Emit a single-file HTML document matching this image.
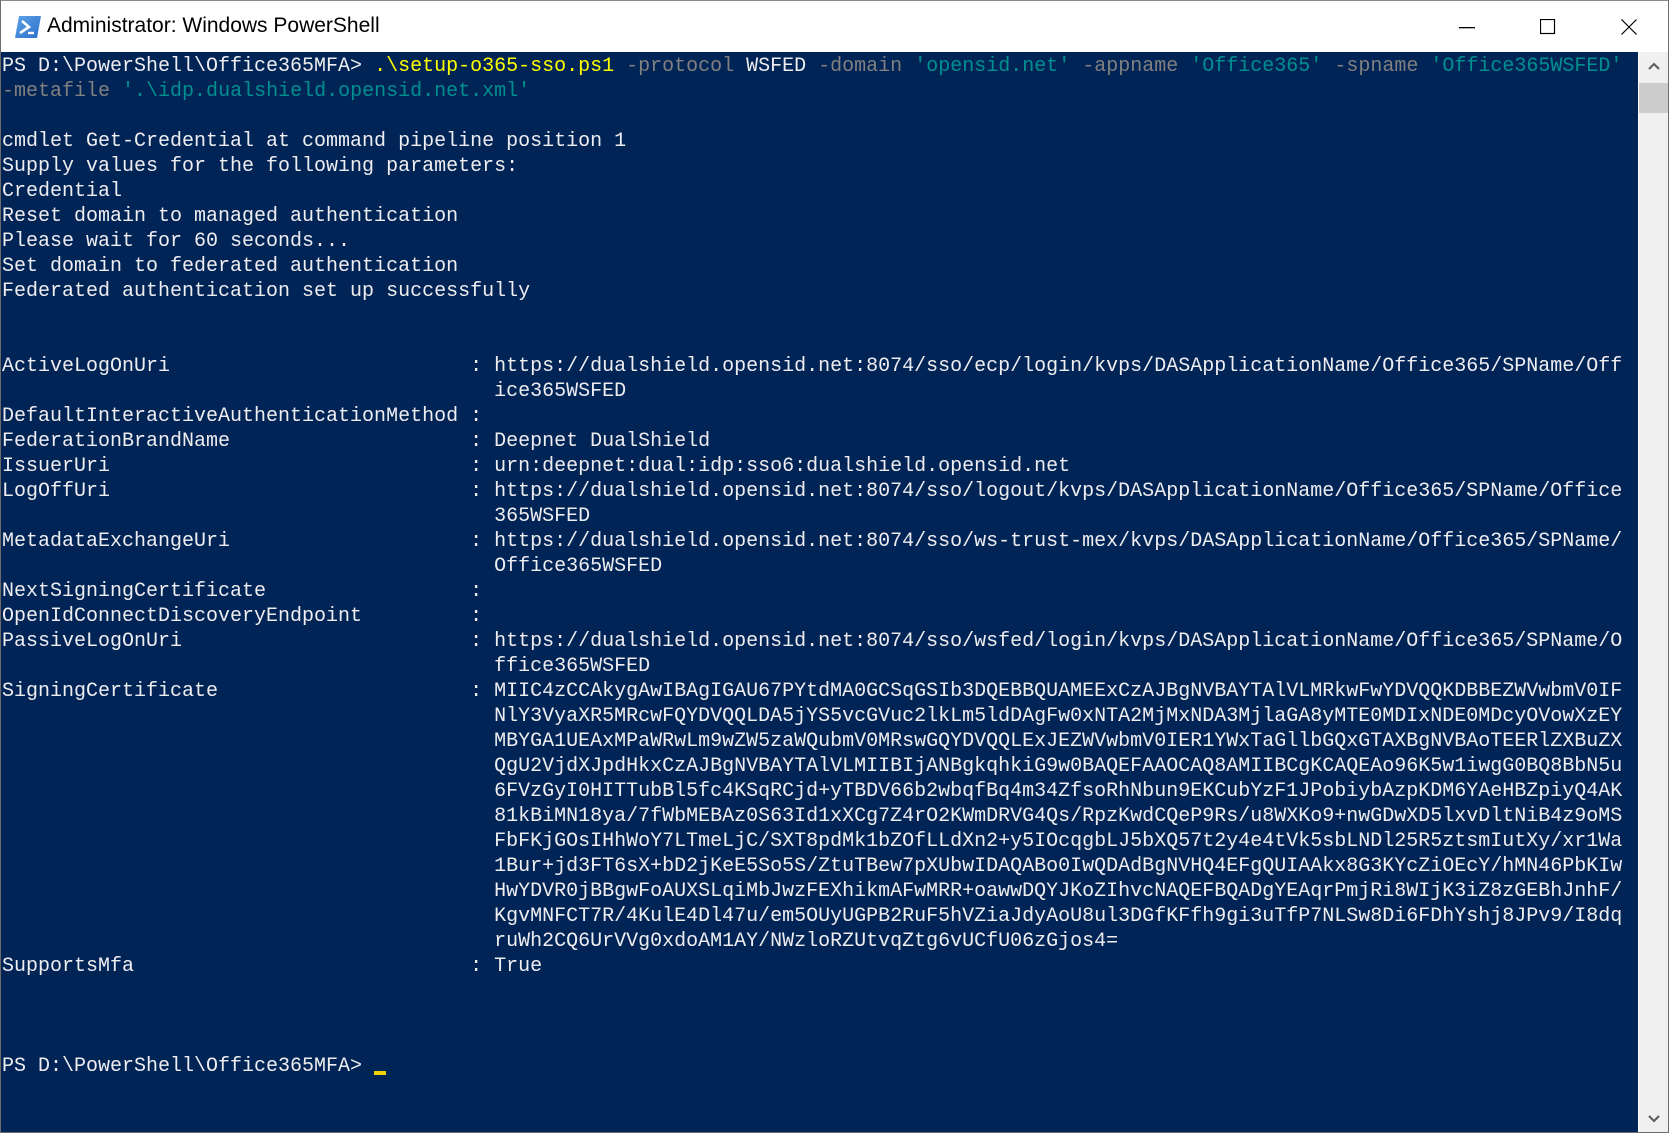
<!DOCTYPE html>
<html><head><meta charset="utf-8"><style>
html,body{margin:0;padding:0;width:1669px;height:1133px;overflow:hidden;background:#fff;}
.win{position:absolute;left:0;top:0;width:1667px;height:1131px;border:1px solid #6b6b6b;border-top:1px solid #8a8a8a;background:#fff;}
.title{position:absolute;left:0;top:0;width:1667px;height:51px;background:#fff;}
.title .t{position:absolute;left:46px;top:13px;font:21px "Liberation Sans",sans-serif;color:#000;}
.console{position:absolute;left:0;top:51px;width:1637px;height:1080px;background:#012456;}
pre{margin:0;position:absolute;left:1px;top:2px;font:20px/25px "Liberation Mono",monospace;color:#eeedf0;}
.y{color:#ffff00;}.g{color:#808080;}.c{color:#008f8f;}
.sb{position:absolute;left:1638px;top:51px;width:29px;height:1080px;background:#f0f0f0;}
.thumb{position:absolute;left:0;top:31px;width:29px;height:30px;background:#cdcdcd;}
.cur{display:inline-block;width:12px;height:4px;background:#f0d000;vertical-align:-4px;}
</style></head><body>
<div class="win">
<div class="title">
<svg style="position:absolute;left:13px;top:14px" width="28" height="24" viewBox="0 0 28 24"><defs><linearGradient id="gr" x1="0" y1="0" x2="1" y2="1"><stop offset="0" stop-color="#5ea3e8"/><stop offset="1" stop-color="#2a6fc9"/></linearGradient></defs><path d="M5 1H27L23 23H1Z" fill="url(#gr)"/><path d="M8 6L15 12L6 18" stroke="#fff" stroke-width="2.6" fill="none"/><path d="M14 18H20" stroke="#fff" stroke-width="2.4"/></svg>
<div class="t">Administrator: Windows PowerShell</div>
<svg style="position:absolute;left:1458px;top:26px" width="16" height="2"><rect width="16" height="1.3" fill="#000"/></svg>
<svg style="position:absolute;left:1539px;top:18px" width="16" height="16"><rect x="0.5" y="0.5" width="14" height="14" fill="none" stroke="#000" stroke-width="1.2"/></svg>
<svg style="position:absolute;left:1620px;top:18px" width="16" height="16"><path d="M0.5 0.5L15.5 15.5M15.5 0.5L0.5 15.5" stroke="#000" stroke-width="1.2"/></svg>
</div>
<div class="console"><pre>PS D:\PowerShell\Office365MFA&gt; <span class="y">.\setup-o365-sso.ps1</span> <span class="g">-protocol</span> WSFED <span class="g">-domain</span> <span class="c">'opensid.net'</span> <span class="g">-appname</span> <span class="c">'Office365'</span> <span class="g">-spname</span> <span class="c">'Office365WSFED'</span>
<span class="g">-metafile</span> <span class="c">'.\idp.dualshield.opensid.net.xml'</span>

cmdlet Get-Credential at command pipeline position 1
Supply values for the following parameters:
Credential
Reset domain to managed authentication
Please wait for 60 seconds...
Set domain to federated authentication
Federated authentication set up successfully


ActiveLogOnUri                         : https://dualshield.opensid.net:8074/sso/ecp/login/kvps/DASApplicationName/Office365/SPName/Off
                                         ice365WSFED
DefaultInteractiveAuthenticationMethod :
FederationBrandName                    : Deepnet DualShield
IssuerUri                              : urn:deepnet:dual:idp:sso6:dualshield.opensid.net
LogOffUri                              : https://dualshield.opensid.net:8074/sso/logout/kvps/DASApplicationName/Office365/SPName/Office
                                         365WSFED
MetadataExchangeUri                    : https://dualshield.opensid.net:8074/sso/ws-trust-mex/kvps/DASApplicationName/Office365/SPName/
                                         Office365WSFED
NextSigningCertificate                 :
OpenIdConnectDiscoveryEndpoint         :
PassiveLogOnUri                        : https://dualshield.opensid.net:8074/sso/wsfed/login/kvps/DASApplicationName/Office365/SPName/O
                                         ffice365WSFED
SigningCertificate                     : MIIC4zCCAkygAwIBAgIGAU67PYtdMA0GCSqGSIb3DQEBBQUAMEExCzAJBgNVBAYTAlVLMRkwFwYDVQQKDBBEZWVwbmV0IF
                                         NlY3VyaXR5MRcwFQYDVQQLDA5jYS5vcGVuc2lkLm5ldDAgFw0xNTA2MjMxNDA3MjlaGA8yMTE0MDIxNDE0MDcyOVowXzEY
                                         MBYGA1UEAxMPaWRwLm9wZW5zaWQubmV0MRswGQYDVQQLExJEZWVwbmV0IER1YWxTaGllbGQxGTAXBgNVBAoTEERlZXBuZX
                                         QgU2VjdXJpdHkxCzAJBgNVBAYTAlVLMIIBIjANBgkqhkiG9w0BAQEFAAOCAQ8AMIIBCgKCAQEAo96K5w1iwgG0BQ8BbN5u
                                         6FVzGyI0HITTubBl5fc4KSqRCjd+yTBDV66b2wbqfBq4m34ZfsoRhNbun9EKCubYzF1JPobiybAzpKDM6YAeHBZpiyQ4AK
                                         81kBiMN18ya/7fWbMEBAz0S63Id1xXCg7Z4rO2KWmDRVG4Qs/RpzKwdCQeP9Rs/u8WXKo9+nwGDwXD5lxvDltNiB4z9oMS
                                         FbFKjGOsIHhWoY7LTmeLjC/SXT8pdMk1bZOfLLdXn2+y5IOcqgbLJ5bXQ57t2y4e4tVk5sbLNDl25R5ztsmIutXy/xr1Wa
                                         1Bur+jd3FT6sX+bD2jKeE5So5S/ZtuTBew7pXUbwIDAQABo0IwQDAdBgNVHQ4EFgQUIAAkx8G3KYcZiOEcY/hMN46PbKIw
                                         HwYDVR0jBBgwFoAUXSLqiMbJwzFEXhikmAFwMRR+oawwDQYJKoZIhvcNAQEFBQADgYEAqrPmjRi8WIjK3iZ8zGEBhJnhF/
                                         KgvMNFCT7R/4KulE4Dl47u/em5OUyUGPB2RuF5hVZiaJdyAoU8ul3DGfKFfh9gi3uTfP7NLSw8Di6FDhYshj8JPv9/I8dq
                                         ruWh2CQ6UrVVg0xdoAM1AY/NWzloRZUtvqZtg6vUCfU06zGjos4=
SupportsMfa                            : True



PS D:\PowerShell\Office365MFA&gt; <span class="cur"></span></pre></div>
<div class="sb"><div class="thumb"></div>
<svg style="position:absolute;left:9px;top:10px" width="12" height="8"><path d="M1 7L6 2L11 7" stroke="#606060" stroke-width="2.2" fill="none"/></svg>
<svg style="position:absolute;left:9px;top:1063px" width="12" height="8"><path d="M1 1L6 6L11 1" stroke="#606060" stroke-width="2.2" fill="none"/></svg>
</div>
</div>
</body></html>
